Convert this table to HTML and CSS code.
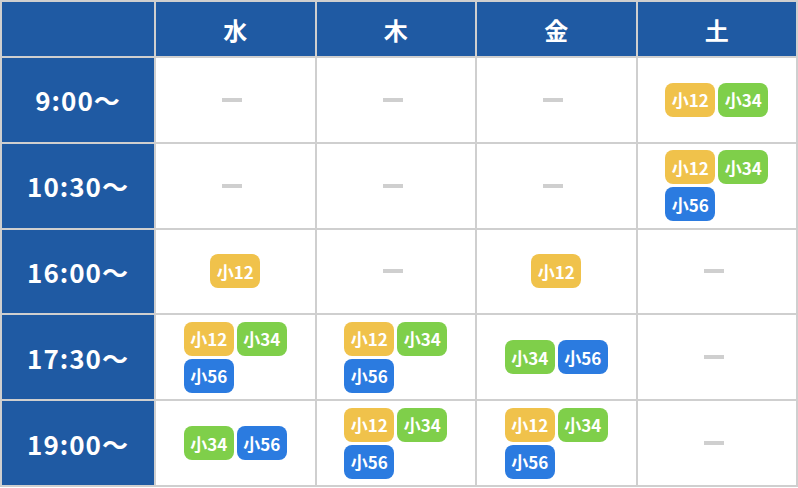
FILE: index.html
```html
<!DOCTYPE html>
<html lang="ja">
<head>
<meta charset="utf-8">
<link rel="stylesheet" href="styles.css">
</head>
<body>
<table class="schedule">
  <thead>
    <tr>
      <th class="corner"></th>
      <th>水</th>
      <th>木</th>
      <th>金</th>
      <th>土</th>
    </tr>
  </thead>
  <tbody>
    <tr>
      <th class="time">9:00〜</th>
      <td><span class="dash"></span></td>
      <td><span class="dash"></span></td>
      <td><span class="dash"></span></td>
      <td><div class="tags"><span class="tag y">小12</span><span class="tag g">小34</span></div></td>
    </tr>
    <tr>
      <th class="time">10:30〜</th>
      <td><span class="dash"></span></td>
      <td><span class="dash"></span></td>
      <td><span class="dash"></span></td>
      <td><div class="tags"><span class="tag y">小12</span><span class="tag g">小34</span><span class="tag b">小56</span></div></td>
    </tr>
    <tr>
      <th class="time">16:00〜</th>
      <td><div class="tags"><span class="tag y">小12</span></div></td>
      <td><span class="dash"></span></td>
      <td><div class="tags"><span class="tag y">小12</span></div></td>
      <td><span class="dash"></span></td>
    </tr>
    <tr>
      <th class="time">17:30〜</th>
      <td><div class="tags"><span class="tag y">小12</span><span class="tag g">小34</span><span class="tag b">小56</span></div></td>
      <td><div class="tags"><span class="tag y">小12</span><span class="tag g">小34</span><span class="tag b">小56</span></div></td>
      <td><div class="tags"><span class="tag g">小34</span><span class="tag b">小56</span></div></td>
      <td><span class="dash"></span></td>
    </tr>
    <tr>
      <th class="time">19:00〜</th>
      <td><div class="tags"><span class="tag g">小34</span><span class="tag b">小56</span></div></td>
      <td><div class="tags"><span class="tag y">小12</span><span class="tag g">小34</span><span class="tag b">小56</span></div></td>
      <td><div class="tags"><span class="tag y">小12</span><span class="tag g">小34</span><span class="tag b">小56</span></div></td>
      <td><span class="dash"></span></td>
    </tr>
  </tbody>
</table>
</body>
</html>
```

FILE: styles.css
```css
html, body {
  margin: 0;
  padding: 0;
  background: #ffffff;
}

body {
  font-family: "Noto Sans CJK JP", "Noto Sans", sans-serif;
}

.schedule {
  width: 798px;
  border-collapse: collapse;
  table-layout: fixed;
  border: 2px solid #cfcfcf;
}

.schedule th,
.schedule td {
  border: 2px solid #cfcfcf;
  padding: 0;
  text-align: center;
  vertical-align: middle;
}

.schedule thead th {
  height: 54px;
  background: #1f5aa3;
  color: #ffffff;
  font-size: 24px;
  font-weight: 700;
}

.schedule thead th.corner {
  width: 152px;
}

.schedule tbody td,
.schedule tbody th {
  height: 83.8px;
}

.schedule th.time {
  background: #1f5aa3;
  color: #ffffff;
  font-size: 26px;
  font-weight: 700;
  letter-spacing: 1px;
}

.tags {
  display: inline-flex;
  flex-wrap: wrap;
  gap: 3px;
  max-width: 103px;
  vertical-align: middle;
}

.tag {
  width: 50px;
  height: 34px;
  border-radius: 8px;
  display: flex;
  align-items: center;
  justify-content: center;
  color: #ffffff;
  font-size: 17px;
  font-weight: 700;
  line-height: 1;
}

.tag.y { background: #f0c24b; }
.tag.g { background: #7fcf4a; }
.tag.b { background: #2b7be0; }

.dash {
  display: block;
  width: 20px;
  height: 4px;
  background: #cfcfcf;
  margin: 0 auto 0 calc(50% - 13px);
}
```
